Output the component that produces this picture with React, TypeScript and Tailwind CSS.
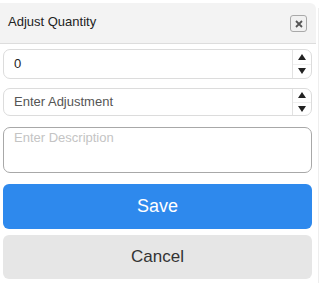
import React, { type FC } from "react";

const font = { fontFamily: '"Liberation Sans", Arial, sans-serif' };

const Spinner: FC = () => (
  <div className="w-[19px] self-stretch border-l border-[#e2e2e2] flex flex-col">
    <div className="flex-1 flex items-center justify-center border-b border-[#f0f0f0]">
      <svg width="8" height="6" viewBox="0 0 8 6">
        <path d="M4 0L8 6H0Z" fill="#222" />
      </svg>
    </div>
    <div className="flex-1 flex items-center justify-center">
      <svg width="8" height="6" viewBox="0 0 8 6">
        <path d="M0 0H8L4 6Z" fill="#222" />
      </svg>
    </div>
  </div>
);

const NumberField: FC<{ value?: string; placeholder?: string; h: string }> = ({
  value,
  placeholder,
  h,
}) => (
  <div
    className={`flex items-center border border-[#dcdcdc] rounded-[7px] overflow-hidden bg-white ${h}`}
  >
    <input
      readOnly
      value={value ?? ""}
      placeholder={placeholder}
      className="flex-1 min-w-0 pl-[10px] text-[13px] text-[#222] placeholder:text-[#555] outline-none bg-transparent"
      style={font}
    />
    <Spinner />
  </div>
);

export default function App() {
  return (
    <div className="w-[321px] h-[283px] flex bg-white overflow-hidden" style={font}>
      <div className="w-[316px] flex flex-col">
        <div className="mt-[3px] h-[41px] bg-[#f3f3f3] border-b border-[#dddddd] rounded-tr-[6px] flex items-center justify-between pl-[8px] pr-[9px]">
          <span className="text-[13px] text-[#222] -mt-[3px]">Adjust Quantity</span>
          <button className="w-[17px] h-[17px] mt-[1px] border border-[#a9a9a9] rounded-[3px] bg-[#f1f1f1] flex items-center justify-center">
            <svg width="8" height="8" viewBox="0 0 8 8">
              <path d="M1 1L7 7M7 1L1 7" stroke="#555" strokeWidth="1.8" />
            </svg>
          </button>
        </div>
        <div className="px-[3px] pr-[4px] pt-[5px] flex flex-col">
          <NumberField value="0" h="h-[30px]" />
          <div className="mt-[9px]">
            <NumberField placeholder="Enter Adjustment" h="h-[28px]" />
          </div>
          <textarea
            readOnly
            placeholder="Enter Description"
            className="mt-[11px] h-[46px] resize-none border border-[#a8a8a8] rounded-[7px] pl-[10px] pt-[1px] leading-[18px] text-[13px] placeholder:text-[#c4c4c4] outline-none"
            style={font}
          />
          <button className="mt-[11px] h-[45px] rounded-[6px] bg-[#2e89ed] text-white text-[18px]">
            Save
          </button>
          <button className="mt-[6px] h-[44px] rounded-[6px] bg-[#e6e6e6] text-[#333] text-[17px]">
            Cancel
          </button>
        </div>
      </div>
      <div className="flex-1 flex">
        <div className="ml-[2px] mt-[8px] w-[1px] bg-[#eeeeee]" />
      </div>
    </div>
  );
}
